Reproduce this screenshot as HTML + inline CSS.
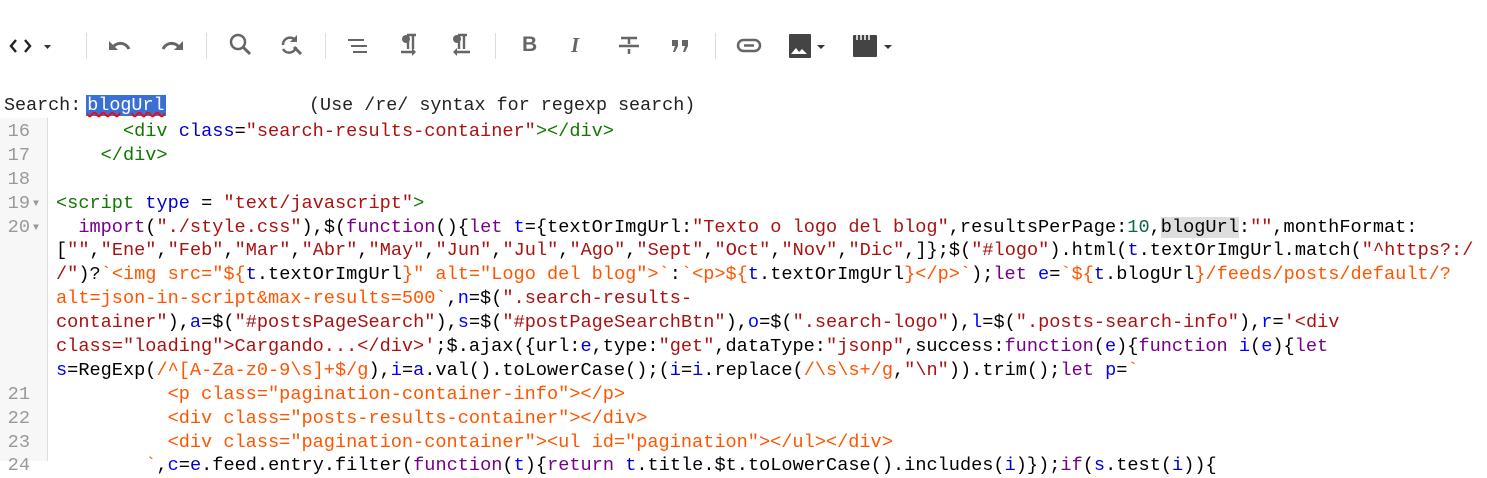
<!DOCTYPE html>
<html><head><meta charset="utf-8"><style>
body{margin:0;width:1487px;height:460px;overflow:hidden;background:#fff;font-family:"Liberation Mono",monospace;position:relative}
.tb{position:absolute;top:29px;left:0;height:34px;width:100%}
.ic{position:absolute;top:0}
.sep{position:absolute;top:4px;width:1px;height:26px;background:#ddd}
.srch{position:absolute;top:95px;left:4px;font-size:18.4px;color:#222;white-space:pre}
.hl{background:#3a6fd6;color:#fff;margin-left:5px;padding:0 1px}
.gut{position:absolute;left:0;top:118px;width:47px;height:343px;background:#f7f7f7;border-right:1px solid #ddd}
.code{position:absolute;top:120px;left:0;font-size:18.6px;line-height:23.9px}
.l{white-space:pre;height:23.9px;position:relative}
.n{position:absolute;left:0;width:30px;text-align:right;color:#999}
.a{position:absolute;left:33px;color:#999;font-size:10px;top:1px}
.t{position:absolute;left:56px;color:#000}
.g{color:#170}.b{color:#00c}.s{color:#a11}.k{color:#708}.v{color:#00f}.o{color:#f50}.m{color:#164}.sel{background:#ddd}
</style></head><body>
<div class="tb">
<svg class="ic" style="left:8px" width="50" height="34" viewBox="0 0 50 34"><path d="M8 11l-5 6 5 6M17 11l5 6-5 6" stroke="#222" stroke-width="2.4" fill="none"/><path d="M36 16h7l-3.5 4z" fill="#333"/></svg>
<div class="sep" style="left:86px"></div>
<svg class="ic" style="left:106px" width="30" height="34"><path d="M6 20c3-7 13-8 17 0" stroke="#666" stroke-width="3" fill="none"/><path d="M3 12v9h9z" fill="#666"/></svg>
<svg class="ic" style="left:156px" width="30" height="34"><path d="M24 20c-3-7-13-8-17 0" stroke="#666" stroke-width="3" fill="none"/><path d="M27 12v9h-9z" fill="#666"/></svg>
<div class="sep" style="left:206px"></div>
<svg class="ic" style="left:227px" width="30" height="34"><circle cx="11" cy="13" r="7" stroke="#666" stroke-width="2.5" fill="none"/><path d="M16 18l7 7" stroke="#666" stroke-width="3"/></svg>
<svg class="ic" style="left:277px" width="30" height="34"><path d="M6 16a7 7 0 0 1 13-4M19 18a7 7 0 0 1-13 2" stroke="#666" stroke-width="2.5" fill="none"/><path d="M17 18l7 7" stroke="#666" stroke-width="3"/><path d="M20 6v7h-7z" fill="#666"/></svg>
<div class="sep" style="left:325px"></div>
<svg class="ic" style="left:345px" width="30" height="34"><path d="M3 11h16M6 17h16M8 23h14" stroke="#666" stroke-width="2"/></svg>
<svg class="ic" style="left:395px" width="30" height="34"><path d="M12 6h9M13 6v14M18 6v14M6 23h14" stroke="#666" stroke-width="2.4" fill="none"/><circle cx="11" cy="10" r="4" fill="#666"/><path d="M17 19l4 4-4 4z" fill="#666"/></svg>
<svg class="ic" style="left:446px" width="30" height="34"><path d="M12 6h9M13 6v14M18 6v14M10 23h14" stroke="#666" stroke-width="2.4" fill="none"/><circle cx="11" cy="10" r="4" fill="#666"/><path d="M11 19l-4 4 4 4z" fill="#666"/></svg>
<div class="sep" style="left:495px"></div>
<div class="ic" style="left:522px;top:4px;font:bold 21px 'Liberation Sans',sans-serif;color:#666">B</div>
<div class="ic" style="left:571px;top:4px;font:italic bold 21px 'Liberation Serif',serif;color:#666">I</div>
<svg class="ic" style="left:615px" width="30" height="34"><path d="M6 9h16M14 9v6M4 17h20M14 20v5" stroke="#666" stroke-width="2.5"/></svg>
<svg class="ic" style="left:667px" width="30" height="34"><path d="M5 11h6v6l-3 6h-2l2-6h-3zM15 11h6v6l-3 6h-2l2-6h-3z" fill="#666"/></svg>
<div class="sep" style="left:715px"></div>
<svg class="ic" style="left:735px" width="30" height="34"><rect x="3" y="11" width="22" height="11" rx="5.5" stroke="#666" stroke-width="2.5" fill="none"/><path d="M9 16.5h10" stroke="#666" stroke-width="2.5"/></svg>
<svg class="ic" style="left:786px" width="45" height="34"><rect x="3" y="5" width="22" height="24" rx="1" fill="#444"/><path d="M5 25l5-6 3 4 3-3 5 5z" fill="#fff"/><path d="M31 16h8l-4 4z" fill="#333"/></svg>
<svg class="ic" style="left:850px" width="45" height="34"><rect x="3" y="6" width="24" height="22" rx="1" fill="#444"/><path d="M7 6v5M11 6v5M15 6v5M19 6v5" stroke="#fff" stroke-width="1.5"/><path d="M34 16h8l-4 4z" fill="#333"/></svg>
</div>
<div class="srch">Search:<span class="hl" style="text-decoration:underline wavy red">blogUrl</span>             (Use /re/ syntax for regexp search)</div>
<div class="gut"></div>
<div class="code">
<div class="l"><span class="n">16</span><span class="t">      <span class="g">&lt;div</span> <span class="b">class</span>=<span class="s">"search-results-container"</span><span class="g">&gt;&lt;/div&gt;</span></span></div>
<div class="l"><span class="n">17</span><span class="t">    <span class="g">&lt;/div&gt;</span></span></div>
<div class="l"><span class="n">18</span></div>
<div class="l"><span class="n">19</span><span class="a">▼</span><span class="t"><span class="g">&lt;script</span> <span class="b">type</span> = <span class="s">"text/javascript"</span><span class="g">&gt;</span></span></div>
<div class="l"><span class="n">20</span><span class="a">▼</span><span class="t">  <span class="k">import</span>(<span class="s">"./style.css"</span>),$(<span class="k">function</span>(){<span class="k">let</span> <span class="v">t</span>={textOrImgUrl:<span class="s">"Texto o logo del blog"</span>,resultsPerPage:<span class="m">10</span>,<span class="sel">blogUrl</span>:<span class="s">""</span>,monthFormat:</span></div>
<div class="l"><span class="t">[<span class="s">""</span>,<span class="s">"Ene"</span>,<span class="s">"Feb"</span>,<span class="s">"Mar"</span>,<span class="s">"Abr"</span>,<span class="s">"May"</span>,<span class="s">"Jun"</span>,<span class="s">"Jul"</span>,<span class="s">"Ago"</span>,<span class="s">"Sept"</span>,<span class="s">"Oct"</span>,<span class="s">"Nov"</span>,<span class="s">"Dic"</span>,]};$(<span class="s">"#logo"</span>).html(<span class="b">t</span>.textOrImgUrl.match(<span class="s">"^https?:/</span></span></div>
<div class="l"><span class="t"><span class="s">/"</span>)?<span class="o">`&lt;img src="${</span><span class="b">t</span>.textOrImgUrl<span class="o">}" alt="Logo del blog"&gt;`</span>:<span class="o">`&lt;p&gt;${</span><span class="b">t</span>.textOrImgUrl<span class="o">}&lt;/p&gt;`</span>);<span class="k">let</span> <span class="v">e</span>=<span class="o">`${</span><span class="b">t</span>.blogUrl<span class="o">}/feeds/posts/default/?</span></span></div>
<div class="l"><span class="t"><span class="o">alt=json-in-script&amp;max-results=500`</span>,<span class="v">n</span>=$(<span class="s">".search-results-</span></span></div>
<div class="l"><span class="t"><span class="s">container"</span>),<span class="v">a</span>=$(<span class="s">"#postsPageSearch"</span>),<span class="v">s</span>=$(<span class="s">"#postPageSearchBtn"</span>),<span class="v">o</span>=$(<span class="s">".search-logo"</span>),<span class="v">l</span>=$(<span class="s">".posts-search-info"</span>),<span class="v">r</span>=<span class="s">'&lt;div</span></span></div>
<div class="l"><span class="t"><span class="s">class="loading"&gt;Cargando...&lt;/div&gt;'</span>;$.ajax({url:<span class="b">e</span>,type:<span class="s">"get"</span>,dataType:<span class="s">"jsonp"</span>,success:<span class="k">function</span>(<span class="v">e</span>){<span class="k">function</span> <span class="v">i</span>(<span class="v">e</span>){<span class="k">let</span></span></div>
<div class="l"><span class="t"><span class="v">s</span>=RegExp(<span class="o">/^[A-Za-z0-9\s]+$/g</span>),<span class="v">i</span>=<span class="b">a</span>.val().toLowerCase();(<span class="b">i</span>=<span class="b">i</span>.replace(<span class="o">/\s\s+/g</span>,<span class="s">"\n"</span>)).trim();<span class="k">let</span> <span class="v">p</span>=<span class="o">`</span></span></div>
<div class="l"><span class="n">21</span><span class="t"><span class="o">          &lt;p class="pagination-container-info"&gt;&lt;/p&gt;</span></span></div>
<div class="l"><span class="n">22</span><span class="t"><span class="o">          &lt;div class="posts-results-container"&gt;&lt;/div&gt;</span></span></div>
<div class="l"><span class="n">23</span><span class="t"><span class="o">          &lt;div class="pagination-container"&gt;&lt;ul id="pagination"&gt;&lt;/ul&gt;&lt;/div&gt;</span></span></div>
<div class="l"><span class="n">24</span><span class="t"><span class="o">        `</span>,<span class="v">c</span>=<span class="b">e</span>.feed.entry.filter(<span class="k">function</span>(<span class="v">t</span>){<span class="k">return</span> <span class="b">t</span>.title.$t.toLowerCase().includes(<span class="b">i</span>)});<span class="k">if</span>(<span class="b">s</span>.test(<span class="b">i</span>)){</span></div>
</div>
</body></html>
